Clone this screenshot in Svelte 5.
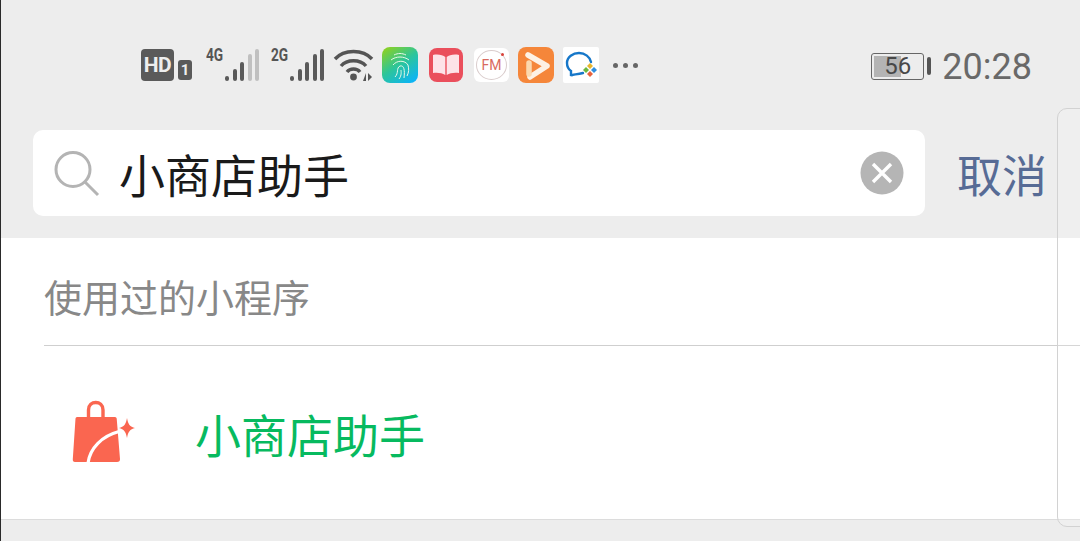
<script>
	let query = "小商店助手";
	const bars4g = [5, 12, 19, 27, 32];
	const bars2g = [5, 12, 19, 27, 32];
</script>

<div class="page">
	<header class="top">
		<div class="status">
			<div class="left">
				<span class="hd">HD</span>
				<span class="sim">1</span>
				<div class="signal s1">
					<span class="net">4G</span>
					<div class="bars">
						{#each bars4g as h, i}
							<i class:off={i > 2} style="height:{h}px"></i>
						{/each}
					</div>
				</div>
				<div class="signal s2">
					<span class="net">2G</span>
					<div class="bars">
						{#each bars2g as h}
							<i style="height:{h}px"></i>
						{/each}
					</div>
				</div>
				<svg class="wifi" width="42" height="36" viewBox="0 0 42 36" fill="none" stroke="#555" stroke-width="3.4">
					<path d="M2 12 C11 2 30 2 39 12" />
					<path d="M8 19 C14 12 27 12 33 19" />
					<path d="M14 25 C17 21 24 21 27 25" />
					<circle cx="20.500" cy="30" r="3.400" fill="#555" stroke="none" />
					<path d="M30 34h3v-8zM35 26v8l4-4z" fill="#555" stroke="none" />
				</svg>
				<svg class="app first" width="36" height="36" viewBox="0 0 36 36">
					<defs>
						<linearGradient id="fp" x1="0.100" y1="0" x2="0.800" y2="1">
							<stop offset="0" stop-color="#8fd11f" />
							<stop offset="0.500" stop-color="#2cc59a" />
							<stop offset="1" stop-color="#0cb4f5" />
						</linearGradient>
					</defs>
					<rect width="36" height="36" rx="8" fill="url(#fp)" />
					<g fill="none" stroke="#e8f8e8" stroke-width="1">
						<path d="M12 8 C16 6 20 6 24 8" />
						<path d="M9 13 C14 9 22 9 27 13" />
						<path d="M11 18 C15 13 23 13 26 18 C27 22 27 25 25 29" />
						<path d="M13 30 C17 26 14 21 18 19 C22 18 23 23 22 31" />
						<path d="M17 32 C20 28 19 25 19 23" />
					</g>
				</svg>
				<svg class="app book" width="34" height="34" viewBox="0 0 34 34">
					<rect width="34" height="34" rx="8" fill="#ea4f5c" />
					<path d="M4 7 C9 6 14 7 16.300 9 V27 C13 25 9 24.500 4 25z" fill="#fde3e8" />
					<path d="M30 7 C25 6 20 7 17.700 9 V27 C21 25 25 24.500 30 25z" fill="#fde3e8" />
				</svg>
				<div class="app fm">
					<span class="ring"></span>
					<span class="dot"></span>
					<span class="fmtext">FM</span>
				</div>
				<svg class="app video" width="36" height="36" viewBox="0 0 36 36">
					<rect width="36" height="36" rx="8" fill="#f5863a" />
					<path d="M10 8 L29 19 L12 30" fill="none" stroke="#fdf1e4" stroke-width="5.500" stroke-linejoin="round" stroke-linecap="round" />
					<path d="M11 16 V27" stroke="#fbd8ae" stroke-width="5.500" stroke-linecap="round" />
				</svg>
				<svg class="app wechat" width="36" height="36" viewBox="0 0 36 36">
					<rect width="36" height="36" rx="2" fill="#fff" />
					<path d="M20 26 C13 28 9 27 8 29 V24 C5 22 4 19 4 16 C4 10 10 6 16 6 C22 6 27 10 28 15" fill="none" stroke="#1677c9" stroke-width="2.400" stroke-linecap="round" />
					<path d="M24 19l3-3 3 3-3 3z" fill="#e8b52c" />
					<path d="M28 23l3-3 3 3-3 3z" fill="#2f8fe0" />
					<path d="M24 27l3-3 3 3-3 3z" fill="#e8623c" />
					<path d="M20 23l3-3 3 3-3 3z" fill="#6cb840" />
				</svg>
				<div class="more"><i></i><i></i><i></i></div>
			</div>
			<div class="right">
				<div class="battery">
					<div class="cell">
						<span class="fill"></span>
						<span class="pct">56</span>
					</div>
					<span class="cap"></span>
				</div>
				<span class="time">20:28</span>
			</div>
		</div>

		<div class="search-row">
			<div class="search">
				<svg class="lens" width="46" height="46" viewBox="0 0 46 46" fill="none" stroke="#b4b4b4" stroke-width="3">
					<circle cx="19" cy="18.500" r="17" />
					<path d="M31 31 L44 44" />
				</svg>
				<span class="query">{query}</span>
				<svg class="clear" width="44" height="44" viewBox="0 0 44 44">
					<circle cx="22" cy="22" r="21.500" fill="#b5b5b5" />
					<path d="M13 13 L31 31 M31 13 L13 31" stroke="#fff" stroke-width="3.400" />
				</svg>
			</div>
			<span class="cancel">取消</span>
		</div>
	</header>

	<section class="results">
		<div class="section-title"><span>使用过的小程序</span></div>
		<div class="item">
			<svg class="bag" width="66" height="66" viewBox="0 0 66 66">
				<path d="M5 17 H43 Q44.500 17 44.700 18.500 L48 59 Q48.200 62 45 62 H3 Q0.500 62 0.800 59 L3.500 18.500 Q3.700 17 5 17z" fill="#fa6650" />
				<path d="M16.500 18 V10 C16.500 0 31 0 31 10 V18" fill="none" stroke="#fa6650" stroke-width="3.400" />
				<path d="M16 63 C18 48 30 36 47 31.500" fill="none" stroke="#fff" stroke-width="3.200" />
				<path d="M55 18 C56 24 58 27 63 28 C58 29 56 32 55 38 C54 32 52 29 47 28 C52 27 54 24 55 18z" fill="#fa6650" />
			</svg>
			<span class="name">小商店助手</span>
		</div>
	</section>

	<div class="peek"></div>
</div>

<style>
	:global(body) {
		margin: 0;
		background: #ededed;
	}

	.page {
		position: relative;
		width: 1080px;
		height: 541px;
		overflow: hidden;
		background: #ededed;
		box-sizing: border-box;
		border-left: 1px solid #2a2a2a;
		font-family: "Noto Sans CJK SC", "Noto Sans", sans-serif;
	}

	.top {
		height: 238px;
		display: flex;
		flex-direction: column;
	}

	.status {
		display: flex;
		align-items: center;
		justify-content: space-between;
		height: 130px;
		padding: 0 48px 0 140px;
		box-sizing: border-box;
	}

	.left {
		display: flex;
		align-items: center;
	}

	.hd {
		width: 33px;
		height: 32px;
		border-radius: 4px;
		background: #5a5a5a;
		color: #eee;
		font: bold 21px/32px "Roboto", sans-serif;
		text-align: center;
		letter-spacing: -0.5px;
	}

	.sim {
		width: 14px;
		height: 20px;
		margin: 10px 0 0 4px;
		border-radius: 3px;
		background: #5a5a5a;
		color: #eee;
		font: bold 15px/20px "Roboto", sans-serif;
		text-align: center;
	}

	.signal {
		position: relative;
		width: 53px;
		height: 34px;
	}

	.s1 {
		margin-left: 14px;
	}

	.s2 {
		margin-left: 12px;
	}

	.net {
		position: absolute;
		left: 0;
		top: -3px;
		color: #555;
		font: bold 19px/20px "Roboto", sans-serif;
		transform: scaleX(0.72);
		transform-origin: left;
	}

	.bars {
		position: absolute;
		right: 0;
		bottom: 1px;
		display: flex;
		align-items: flex-end;
		gap: 3.500px;
	}

	.bars i {
		width: 4px;
		border-radius: 2px;
		background: #5a5a5a;
	}

	.bars i.off {
		background: #c0c0c0;
	}

	.wifi {
		margin-left: 9px;
	}

	.app {
		flex: none;
	}

	.first {
		margin-left: 7px;
	}

	.book {
		margin-left: 11px;
	}

	.fm {
		position: relative;
		width: 35px;
		height: 34px;
		border-radius: 6px;
		background: #fff;
		margin-left: 11px;
	}

	.video {
		margin-left: 9px;
	}

	.wechat {
		margin-left: 9px;
	}

	.ring {
		position: absolute;
		inset: 2px;
		border: 1px solid #d9cccc;
		border-radius: 50%;
	}

	.dot {
		position: absolute;
		top: 5px;
		right: 5px;
		width: 3px;
		height: 3px;
		border-radius: 50%;
		background: #d8413a;
	}

	.fmtext {
		position: absolute;
		inset: 0;
		text-align: center;
		font: 14px/34px "Roboto", sans-serif;
		color: #d96a60;
	}

	.more {
		display: flex;
		gap: 5px;
		margin-left: 14px;
	}

	.more i {
		width: 5px;
		height: 5px;
		border-radius: 50%;
		background: #666;
	}

	.right {
		display: flex;
		align-items: center;
		gap: 11px;
	}

	.battery {
		display: flex;
		align-items: center;
		gap: 3px;
		margin-top: 2px;
	}

	.cell {
		position: relative;
		width: 53px;
		height: 27px;
		box-sizing: border-box;
		border: 1px solid #666;
		border-radius: 3px;
		padding: 2px;
	}

	.fill {
		display: block;
		width: 27px;
		height: 100%;
		background: #b4b4b4;
	}

	.pct {
		position: absolute;
		inset: 0;
		text-align: center;
		font: 24px/25px "Roboto", sans-serif;
		color: #484848;
	}

	.cap {
		width: 4px;
		height: 18px;
		border-radius: 2px;
		background: #555;
	}

	.time {
		margin-top: 4px;
		font: 36px/42px "Roboto", sans-serif;
		color: #696969;
	}

	.search-row {
		display: flex;
		align-items: center;
		padding-left: 32px;
	}

	.search {
		display: flex;
		align-items: center;
		width: 892px;
		height: 86px;
		box-sizing: border-box;
		padding: 0 21px;
		background: #fff;
		border-radius: 10px;
	}

	.lens {
		flex: none;
		margin-top: 1px;
	}

	.query {
		flex: 1;
		margin-left: 19px;
		font-size: 46px;
		color: #1a1a1a;
		white-space: nowrap;
	}

	.clear {
		flex: none;
	}

	.cancel {
		margin-left: 32px;
		font-size: 45px;
		color: #576b95;
		white-space: nowrap;
	}

	.results {
		background: #fff;
		height: 282px;
		box-sizing: border-box;
		border-bottom: 1px solid #dcdcdc;
		padding-left: 43px;
	}

	.section-title {
		height: 108px;
		box-sizing: border-box;
		display: flex;
		align-items: center;
		border-bottom: 1px solid #cfcfcf;
		padding-top: 8px;
		font-size: 38px;
		color: #888;
	}

	.item {
		display: flex;
		align-items: center;
		height: 173px;
	}

	.bag {
		flex: none;
		margin-left: 28px;
		margin-top: 1px;
	}

	.name {
		margin-left: 57px;
		font-size: 46px;
		color: #07ba5f;
		white-space: nowrap;
	}

	.peek {
		position: absolute;
		left: 1056px;
		top: 108px;
		width: 60px;
		height: 419px;
		box-sizing: border-box;
		border: 1.500px solid #d2d2d2;
		border-radius: 10px;
		background: rgba(255, 255, 255, 0.15);
	}
</style>
